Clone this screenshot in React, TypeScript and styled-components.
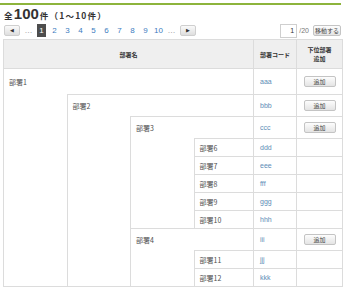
import { FC } from 'react';
import styled, { createGlobalStyle } from 'styled-components';

type Dept = {
    name: string;
    code: string;
    children?: Dept[];
};

const leaves = (from: number, codes: string[]): Dept[] =>
    codes.map((code, i) => ({ name: `部署${from + i}`, code }));

const departments: Dept[] = [
    {
        name: '部署1', code: 'aaa', children: [
            {
                name: '部署2', code: 'bbb', children: [
                    { name: '部署3', code: 'ccc', children: leaves(6, ['ddd', 'eee', 'fff', 'ggg', 'hhh']) },
                    { name: '部署4', code: 'iii', children: leaves(11, ['jjj', 'kkk']) },
                ]
            }
        ]
    }
];

const pages = [1, 2, 3, 4, 5, 6, 7, 8, 9, 10];

const line = '#dcdcdc';

const GlobalStyle = createGlobalStyle`
    html, body {
        margin: 0;
        background: #fff;
        overflow: hidden;
    }
    body {
        font-family: "Noto Sans CJK JP", "Noto Sans", sans-serif;
        color: #555;
    }
`;

const Page = styled.div`
    width: 348px;
    padding-top: 3px;
`;

const TopRule = styled.div`
    width: 341px;
    height: 2px;
    background: #8db43c;
`;

const Summary = styled.div`
    display: flex;
    align-items: baseline;
    height: 18px;
    padding-left: 4px;
    color: #333;
    line-height: 18px;
`;

const SmallText = styled.span<{ $wide?: boolean }>`
    font-size: 8.5px;
    font-weight: bold;
    letter-spacing: ${p => p.$wide ? '1.2px' : '0.3px'};
`;

const Total = styled.span`
    font-family: "Liberation Sans", Arial, sans-serif;
    font-size: 15px;
    font-weight: bold;
    margin: 0 1px;
`;

const Pager = styled.div`
    display: flex;
    align-items: center;
    justify-content: space-between;
    height: 15px;
    padding: 0 7px 0 4px;
`;

const PageLinks = styled.div`
    display: flex;
    align-items: center;
    gap: 4px;
`;

const ArrowButton = styled.button`
    width: 16px;
    height: 11px;
    padding: 0;
    border: 1px solid #cfcfcf;
    border-radius: 2px;
    background: linear-gradient(#fafafa, #dedede);
    color: #333;
    font-size: 5px;
    line-height: 9px;
`;

const PageLink = styled.span<{ $active?: boolean }>`
    width: 9px;
    height: 13px;
    font-family: "Liberation Sans", Arial, sans-serif;
    font-size: 8px;
    line-height: 13px;
    text-align: center;
    color: ${p => p.$active ? '#fff' : '#3d7cc0'};
    background: ${p => p.$active ? '#4d4d4d' : 'transparent'};
`;

const Dots = styled.span`
    width: 9px;
    font-family: "Liberation Sans", Arial, sans-serif;
    font-size: 8px;
    color: #888;
    text-align: center;
`;

const JumpBox = styled.div`
    display: flex;
    align-items: center;
`;

const PageInput = styled.div`
    width: 17px;
    height: 14px;
    box-sizing: border-box;
    border: 1px solid #cfcfcf;
    padding-right: 2px;
    font-family: "Liberation Sans", Arial, sans-serif;
    font-size: 7px;
    line-height: 12px;
    text-align: right;
    color: #333;
`;

const PageCount = styled.span`
    margin: 0 4px 0 2px;
    font-family: "Liberation Sans", Arial, sans-serif;
    font-size: 7px;
    color: #777;
`;

const SmallButton = styled.button<{ $w: number }>`
    width: ${p => p.$w}px;
    height: 11px;
    padding: 0;
    border: 1px solid #c4c4c4;
    border-radius: 2px;
    background: linear-gradient(#fdfdfd, #e4e4e4);
    font-family: "Noto Sans CJK JP", sans-serif;
    font-size: 6px;
    line-height: 9px;
    color: #444;
`;

const Table = styled.div`
    margin: 1px 0 0 3px;
    width: 340px;
    border-bottom: 1px solid ${line};
`;

const HeaderRow = styled.div`
    display: flex;
    height: 29px;
    box-sizing: border-box;
    border-top: 1px solid ${line};
    border-left: 1px solid ${line};
    background: #efefef;
    color: #333;
    font-size: 6px;
    font-weight: bold;
`;

const HeadCell = styled.div<{ $w?: number; $last?: boolean }>`
    ${p => p.$w ? `width: ${p.$w}px;` : 'flex: 1;'}
    box-sizing: border-box;
    display: flex;
    align-items: center;
    justify-content: center;
    text-align: center;
    line-height: 9px;
    ${p => p.$w ? `border-left: 1px solid ${line};` : ''}
    ${p => p.$last ? `border-right: 1px solid ${line};` : ''}
`;

const Block = styled.div`
    display: flex;
    flex-direction: column;
    border-left: 1px solid ${line};
`;

const Row = styled.div<{ $h: number }>`
    display: flex;
    height: ${p => p.$h}px;
    box-sizing: border-box;
    border-top: 1px solid ${line};
    font-size: 7px;
`;

const NameCell = styled.div`
    flex: 1;
    display: flex;
    align-items: center;
    padding-left: 5px;
    color: #505050;
`;

const CodeCell = styled.div`
    width: 43px;
    box-sizing: border-box;
    display: flex;
    align-items: center;
    padding-left: 6px;
    border-left: 1px solid ${line};
    font-family: "Liberation Sans", Arial, sans-serif;
    color: #5d8db6;
`;

const AddCell = styled.div`
    width: 47px;
    box-sizing: border-box;
    display: flex;
    align-items: center;
    justify-content: center;
    border-left: 1px solid ${line};
    border-right: 1px solid ${line};
`;

const Children = styled.div`
    display: flex;
    flex-direction: column;
    margin-left: 62.5px;
`;

const DeptBlock: FC<{ dept: Dept; depth: number }> = ({ dept, depth }) => {
    const canAdd = depth < 3;
    const h = depth === 0 ? 26 : canAdd ? 22 : 18;

    return <Block>
        <Row $h={h}>
            <NameCell>{dept.name}</NameCell>
            <CodeCell>{dept.code}</CodeCell>
            <AddCell>
                {canAdd && <SmallButton $w={32}>追加</SmallButton>}
            </AddCell>
        </Row>
        {
            dept.children &&
            <Children>
                {dept.children.map(child =>
                    <DeptBlock key={child.code} dept={child} depth={depth + 1} />
                )}
            </Children>
        }
    </Block>
};

const App: FC = () => {
    return <>
        <GlobalStyle />
        <Page>
            <TopRule />
            <Summary>
                <SmallText>全</SmallText>
                <Total>100</Total>
                <SmallText $wide>件（1〜10件）</SmallText>
            </Summary>

            <Pager>
                <PageLinks>
                    <ArrowButton>◀</ArrowButton>
                    <Dots>…</Dots>
                    {pages.map(p =>
                        <PageLink key={p} $active={p === 1}>{p}</PageLink>
                    )}
                    <Dots>…</Dots>
                    <ArrowButton>▶</ArrowButton>
                </PageLinks>
                <JumpBox>
                    <PageInput>1</PageInput>
                    <PageCount>/20</PageCount>
                    <SmallButton $w={28}>移動する</SmallButton>
                </JumpBox>
            </Pager>

            <Table>
                <HeaderRow>
                    <HeadCell>部署名</HeadCell>
                    <HeadCell $w={43}>部署コード</HeadCell>
                    <HeadCell $w={47} $last>下位部署<br />追加</HeadCell>
                </HeaderRow>
                {departments.map(d =>
                    <DeptBlock key={d.code} dept={d} depth={0} />
                )}
            </Table>
        </Page>
    </>
};

export default App;
